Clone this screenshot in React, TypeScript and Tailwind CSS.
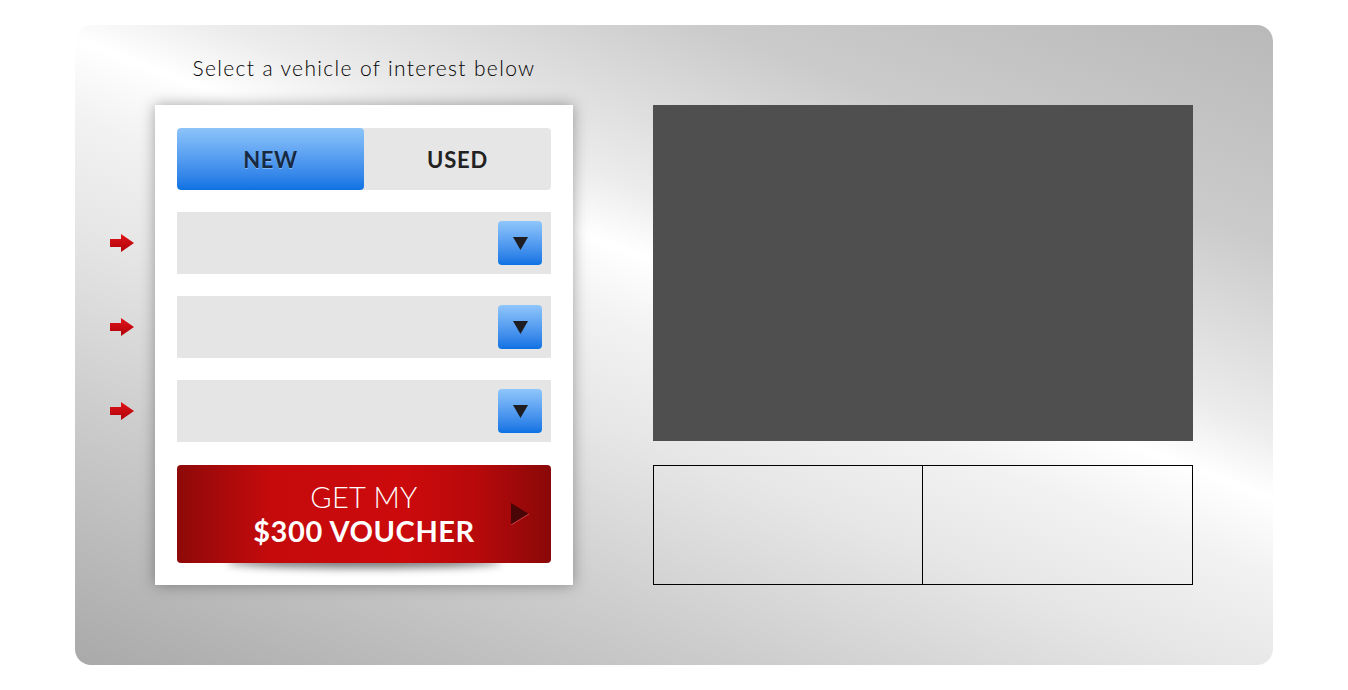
import React, { useState } from 'react';

const FONT = { fontFamily: 'Lato, "Noto Sans", "Liberation Sans", sans-serif' };

// Small red arrow pointing at each dropdown
const RedArrow = () => (
  <svg width="26" height="20" viewBox="0 0 26 20" className="absolute -left-[68px] top-1/2 -translate-y-1/2">
    <defs>
      <linearGradient id="ra" x1="0" y1="0" x2="0" y2="1">
        <stop offset="0" stopColor="#e0141a" />
        <stop offset="1" stopColor="#b00008" />
      </linearGradient>
    </defs>
    <path d="M1 6 H12 V1 L25 10 L12 19 V14 H1 Z" fill="url(#ra)" />
  </svg>
);

const DropButton = () => (
  <div className="w-[44px] h-[44px] rounded-[4px] bg-gradient-to-b from-[#8fc6fb] to-[#0a72e3] flex items-center justify-center">
    <svg width="17" height="15" viewBox="0 0 17 15">
      <path d="M1 1 H16 L8.5 14 Z" fill="#1d1d22" />
    </svg>
  </div>
);

const Dropdown = () => (
  <div className="relative h-[62px] bg-[#e5e5e5] flex items-center justify-end pr-[9px]">
    <RedArrow />
    <DropButton />
  </div>
);

export default function App() {
  const [tab, setTab] = useState<'new' | 'used'>('new');

  return (
    <div className="w-[1348px] h-[690px] bg-white pt-[25px] pl-[75px]" style={FONT}>
      <div className="w-[1198px] h-[640px] rounded-[16px] bg-[linear-gradient(21deg,#a9a9a9_0%,#cdcdcd_24%,#e6e6e6_40%,#f2f2f2_50%,#ffffff_57%,#ececec_63%,#cbcbcb_80%,#b9b9b9_100%)] flex px-[80px] gap-[80px]">
        {/* left column */}
        <div className="w-[418px] pt-[29px] flex flex-col">
          <div className="h-[28px] leading-[28px] text-center text-[21px] font-light text-black tracking-[1.35px]">
            Select a vehicle of interest below
          </div>
          <div className="mt-[23px] h-[480px] bg-white shadow-[0_0_14px_rgba(0,0,0,0.35)] px-[22px] pt-[23px] flex flex-col gap-[22px]">
            <div className="h-[62px] rounded-[4px] bg-[#e6e6e6] flex overflow-hidden">
              <button
                onClick={() => setTab('new')}
                className={`w-[187px] h-full rounded-[4px] text-[22px] font-bold tracking-[0.6px] ${
                  tab === 'new'
                    ? 'bg-gradient-to-b from-[#8cc4fa] to-[#0a72e3] text-[#162a44] [text-shadow:0_1px_0_rgba(255,255,255,0.35)]'
                    : 'text-[#222]'
                }`}
              >
                NEW
              </button>
              <button
                onClick={() => setTab('used')}
                className={`flex-1 h-full rounded-[4px] text-[22px] font-bold tracking-[0.8px] ${
                  tab === 'used'
                    ? 'bg-gradient-to-b from-[#8cc4fa] to-[#0a72e3] text-[#162a44]'
                    : 'text-[#222]'
                }`}
              >
                USED
              </button>
            </div>

            <Dropdown />
            <Dropdown />
            <Dropdown />

            {/* voucher button */}
            <div className="relative mt-px">
              <div className="absolute left-[50px] right-[50px] -bottom-[5px] h-[12px] rounded-[50%] bg-black/55 blur-[4px]" />
              <button className="relative w-full h-[98px] rounded-[4px] bg-[linear-gradient(90deg,#8e0909_0%,#c50a0c_25%,#cc0a0c_60%,#b8090b_80%,#8a0808_100%)] text-white flex flex-col items-center justify-center">
                <span className="text-[29px] font-light leading-[34px] tracking-[0.3px]">GET MY</span>
                <span className="text-[29px] font-bold leading-[34px] tracking-[0.6px]">$300 VOUCHER</span>
                <svg width="18" height="22" viewBox="0 0 18 22" className="absolute right-[22px] top-[38px]">
                  <path d="M0 0 L18 11 L0 22 Z" fill="#4a0506" />
                  <path d="M0 22 L18 11" stroke="#d04040" strokeWidth="1" />
                </svg>
              </button>
            </div>
          </div>
        </div>

        {/* right column */}
        <div className="w-[540px] pt-[80px] flex flex-col gap-[24px]">
          <div className="h-[336px] bg-[#4f4f4f]" />
          <div className="h-[120px] border border-black flex">
            <div className="w-[269px] border-r border-black" />
            <div className="flex-1" />
          </div>
        </div>
      </div>
    </div>
  );
}
